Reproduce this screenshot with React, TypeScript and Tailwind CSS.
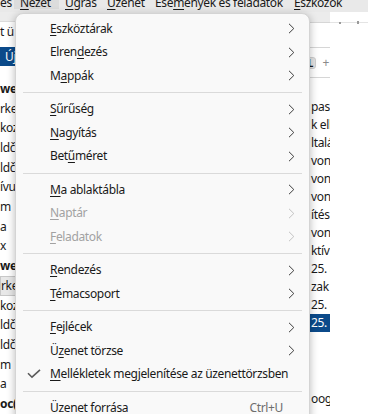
import type { ReactNode } from 'react'

type MenuItem =
  | { sep: true }
  | {
      sep?: false
      label: string
      u?: number
      sub?: boolean
      disabled?: boolean
      checked?: boolean
      shortcut?: string
    }

const items: MenuItem[] = [
  { label: 'Eszköztárak', u: 0, sub: true },
  { label: 'Elrendezés', u: 5, sub: true },
  { label: 'Mappák', u: 1, sub: true },
  { sep: true },
  { label: 'Sűrűség', u: 0, sub: true },
  { label: 'Nagyítás', u: 0, sub: true },
  { label: 'Betűméret', u: 3, sub: true },
  { sep: true },
  { label: 'Ma ablaktábla', u: 0, sub: true },
  { label: 'Naptár', u: 0, sub: true, disabled: true },
  { label: 'Feladatok', u: 0, sub: true, disabled: true },
  { sep: true },
  { label: 'Rendezés', u: 0, sub: true },
  { label: 'Témacsoport', u: 0, sub: true },
  { sep: true },
  { label: 'Fejlécek', u: 0, sub: true },
  { label: 'Üzenet törzse', u: 1, sub: true },
  { label: 'Mellékletek megjelenítése az üzenettörzsben', u: 0, checked: true },
  { sep: true },
  { label: 'Üzenet forrása', shortcut: 'Ctrl+U' },
]

const folderRows = [
  { t: 'we', b: true },
  { t: 'rke:' },
  { t: 'koz' },
  { t: 'ldč' },
  { t: 'ldč' },
  { t: 'ívu' },
  { t: 'm' },
  { t: 'a' },
  { t: 'x' },
  { t: 'we', b: true },
  { t: 'rke:', sel: true },
  { t: 'koz' },
  { t: 'ldč' },
  { t: 'ldč' },
  { t: 'm' },
  { t: 'a' },
  { t: 'oc(', b: true },
]

const mailRows = ['pas', 'k ell', 'ltalá', 'von', 'von', 'von', 'ítés', 'von', 'ktív', '25. a', 'zak', '25. a', '25. a']

// underline the access key letter
const withKey = (label: string, u?: number): ReactNode => {
  if (u === undefined) return label
  return (
    <>
      {label.slice(0, u)}
      <span className='underline underline-offset-[2px] decoration-1'>{label[u]}</span>
      {label.slice(u + 1)}
    </>
  )
}

const Chevron = ({ light }: { light?: boolean }) => (
  <svg width='7' height='11' viewBox='0 0 7 11' fill='none'>
    <path d='M1 0.8 L5.8 5.5 L1 10.2' stroke={light ? '#c2c2c2' : '#3c3c3c'} strokeWidth='1' />
  </svg>
)

const Check = () => (
  <svg width='14' height='10' viewBox='0 0 14 10' fill='none'>
    <path d='M1 4.2 L5 8.2 L13 0.8' stroke='#5b5b5b' strokeWidth='1.6' />
  </svg>
)

export default function App() {
  return (
    <div className="relative w-[368px] h-[414px] overflow-hidden bg-white font-['Noto_Sans',sans-serif] text-[12px] tracking-[-0.35px] text-[#1a1a1a]">
      {/* Menu bar */}
      <div className='h-3 bg-[#e9e9e9] overflow-hidden'>
        <div className='flex -mt-[4px] leading-[13px] whitespace-nowrap'>
          <div className='w-[14px]'>és</div>
          <div className='w-[45px] pl-[6px] bg-[#dcdcdc]'>{withKey('Nézet', 0)}</div>
          <div className='w-[48px] pl-[6px]'>{withKey('Ugrás', 0)}</div>
          <div className='w-[48px]'>{withKey('Üzenet', 0)}</div>
          <div className='w-[139px]'>{withKey('Események és feladatok', 3)}</div>
          <div>{withKey('Eszközök', 0)}</div>
        </div>
      </div>

      <div className='flex h-[402px]'>
        {/* Folder pane */}
        <div className='w-[48px] flex flex-col'>
          <div className='h-[10px] bg-[#ececec] border-b border-[#dcdcdc]' />
          <div className='h-[20px] flex items-center leading-none whitespace-nowrap'>t ü</div>
          <div className='h-[6px]' />
          <div className='h-[19px] bg-[#0b4a8a] text-white flex items-center pl-[5px] leading-none'>Új</div>
          <div className='h-[13px]' />
          {folderRows.map((r, i) => (
            <div
              key={i}
              className={`h-[20px] flex items-center leading-none whitespace-nowrap ${r.b ? 'font-bold' : ''} ${
                r.sel ? 'bg-[#e8e8e8] border border-[#c8c8c8]' : ''
              }`}
            >
              {r.t}
            </div>
          ))}
        </div>

        {/* Message pane */}
        <div className='w-[282px] flex flex-col overflow-hidden'>
          <div className='h-[11px] bg-[#ececec] border-b border-[#d6d6d6]' />
          <div className='h-[25px] border-b border-[#d6d6d6]' />
          <div className='h-[30px] border-b border-[#d6d6d6] flex items-center justify-end gap-[6px] pr-[1px]'>
            <span className='h-[12px] w-[12px] rounded-[3px] bg-[#e3e3e3] border border-[#cfcfcf] text-[10px] font-bold leading-[10px] flex items-center justify-center'>
              L
            </span>
            <span className='text-[#8a8a8a] text-[12px] leading-none'>+</span>
          </div>
          <div className='h-[20px]' />
          {mailRows.map((t, i) => (
            <div
              key={i}
              className={`h-[18px] flex items-center pl-[263px] leading-none whitespace-nowrap ${
                i === mailRows.length - 1 ? 'bg-[#0b4a8a] text-white' : ''
              }`}
            >
              {t}
            </div>
          ))}
          <div className='h-[58px]' />
          <div className='h-[18px] flex items-center pl-[263px] leading-none whitespace-nowrap'>oog</div>
        </div>

        {/* outside window */}
        <div className='flex-1 bg-white relative'>
          <div className='h-[11px] border-b border-[#e4e4e4] flex items-end justify-between px-[9px]'>
            <span className='w-[2px] h-[2px] bg-[#9a9a9a] mb-[-2px]' />
            <span className='w-[2px] h-[3px] bg-[#9a9a9a] mb-[-2px]' />
          </div>
        </div>
      </div>

      {/* Nézet popup menu */}
      <div className='absolute left-[15px] top-[13px] w-[295px] h-[420px] bg-[#f9f9f9] border border-[#d4d4d4] rounded-[8px] shadow-[0_2px_8px_rgba(0,0,0,0.28)] pt-[3px]'>
        {items.map((it, i) =>
          it.sep ? (
            <div key={i} className='my-[4.5px] mx-[7px] h-px bg-[#dadada]' />
          ) : (
            <div
              key={i}
              className={`h-[23.5px] flex items-center whitespace-nowrap ${it.disabled ? 'text-[#a2a2a2]' : ''}`}
            >
              <div className='w-[34px] shrink-0 flex justify-center pl-[2px]'>{it.checked && <Check />}</div>
              <div className='flex-1 leading-none'>{withKey(it.label, it.u)}</div>
              {it.shortcut && <div className='text-[#6d6d6d] pr-[26px] leading-none'>{it.shortcut}</div>}
              {it.sub && (
                <div className='pr-[14px] flex items-center'>
                  <Chevron light={it.disabled} />
                </div>
              )}
            </div>
          )
        )}
      </div>
    </div>
  )
}
